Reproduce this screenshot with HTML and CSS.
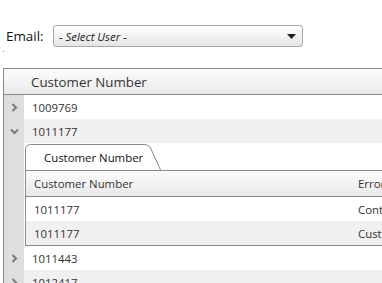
FILE: index.html
```html
<!DOCTYPE html>
<html lang="en">
  <head>
    <meta charset="UTF-8" />
    <title>Customer Errors</title>
    <link rel="stylesheet" href="styles.css">
  </head>
  <body>
    <div class="toolbar">
      <label class="label">Email:</label>
      <div class="select">
        <span class="select-text">- Select User -</span>
        <svg class="select-arrow" width="9" height="5" viewBox="0 0 9 5"><path d="M0 0h9L4.5 5z" fill="#222"/></svg>
      </div>
    </div>
    <div class="mark"></div>

    <div class="grid">
      <div class="grid-header">
        <div class="ind"></div>
        <div class="hcell">Customer Number</div>
      </div>

      <div class="row">
        <div class="ind">
          <svg width="7" height="9" viewBox="0 0 7 9"><path d="M1.5 1l3.5 3.5-3.5 3.5" fill="none" stroke="#7a7a7a" stroke-width="2"/></svg>
        </div>
        <div class="cell">1009769</div>
      </div>
      <div class="row alt">
        <div class="ind">
          <svg width="9" height="7" viewBox="0 0 9 7"><path d="M1 1.5l3.5 3.5 3.5-3.5" fill="none" stroke="#7a7a7a" stroke-width="2"/></svg>
        </div>
        <div class="cell">1011177</div>
      </div>

      <div class="detail-row">
        <div class="ind"></div>
        <div class="detail">
          <div class="tabs">
            <div class="tab">
              <svg class="tab-shape" width="136" height="26" viewBox="0 0 136 26">
                <path d="M0.5 26V5.5Q0.5 0.5 5.5 0.5H119Q124 0.5 126 5L135.5 26" fill="#fff" stroke="#8a8a8a"/>
              </svg>
              <span class="tab-text">Customer Number</span>
            </div>
          </div>
          <div class="subgrid">
            <div class="sub-header">
              <div class="scell first">Customer Number</div>
              <div class="scell">Error</div>
            </div>
            <div class="sub-row">
              <div class="scell first">1011177</div>
              <div class="scell">Contact not found</div>
            </div>
            <div class="sub-row alt">
              <div class="scell first">1011177</div>
              <div class="scell">Customer not found</div>
            </div>
          </div>
        </div>
      </div>

      <div class="row">
        <div class="ind">
          <svg width="7" height="9" viewBox="0 0 7 9"><path d="M1.5 1l3.5 3.5-3.5 3.5" fill="none" stroke="#7a7a7a" stroke-width="2"/></svg>
        </div>
        <div class="cell">1011443</div>
      </div>
      <div class="row alt">
        <div class="ind">
          <svg width="7" height="9" viewBox="0 0 7 9"><path d="M1.5 1l3.5 3.5-3.5 3.5" fill="none" stroke="#7a7a7a" stroke-width="2"/></svg>
        </div>
        <div class="cell">1012417</div>
      </div>
    </div>
  </body>
</html>
```

FILE: styles.css
```css
body {
  margin: 0;
  overflow: hidden;
  font-family: "Open Sans", Arial, sans-serif;
  font-size: 11.4px;
  color: #333;
  background: #fff;
}

.toolbar {
  display: flex;
  align-items: center;
  padding: 25px 0 0 6px;
}

.label {
  font-size: 13.4px;
  color: #111;
  width: 47px;
}

.select {
  display: flex;
  align-items: center;
  justify-content: space-between;
  box-sizing: border-box;
  width: 250px;
  height: 22px;
  padding: 0 5px 0 5px;
  border: 1px solid #a9a9a9;
  border-radius: 3px;
  background: linear-gradient(to bottom, #ffffff 0%, #f3f3f3 50%, #e4e4e4 100%);
}

.select-text {
  font-style: italic;
  color: #222;
}

.select-arrow {
  margin-right: 1px;
}

.mark {
  width: 1px;
  height: 1px;
  margin: 4px 0 0 3px;
  background: #888;
}

.grid {
  width: 560px;
  margin: 16px 0 0 3px;
  border-top: 1px solid #8a8a8a;
  border-left: 1px solid #8a8a8a;
}

.grid-header {
  display: flex;
  height: 25px;
  border-bottom: 1px solid #8a8a8a;
  background: linear-gradient(to bottom, #fbfbfb 0%, #f3f3f3 50%, #e8e8e8 100%);
}

.grid-header .ind {
  background: transparent;
}

.hcell {
  display: flex;
  align-items: center;
  padding-left: 7px;
  font-size: 13.3px;
  color: #333;
}

.ind {
  display: flex;
  align-items: center;
  justify-content: center;
  flex: 0 0 20px;
  background: #dedede;
}

.row {
  display: flex;
  height: 24px;
}

.row.alt .cell,
.sub-row.alt {
  background: #f0f0f0;
}

.cell {
  flex: 1;
  display: flex;
  align-items: center;
  padding-left: 8px;
}

.detail-row {
  display: flex;
}

.detail {
  flex: 1;
  padding: 1px 0 0 1px;
}

.tabs {
  display: flex;
}

.tab {
  display: grid;
  height: 26px;
}

.tab-shape,
.tab-text {
  grid-area: 1 / 1;
}

.tab-text {
  align-self: center;
  padding: 1px 0 0 19px;
  color: #111;
}

.subgrid {
  border-top: 1px solid #8a8a8a;
  border-left: 1px solid #8a8a8a;
  border-bottom: 1px solid #8a8a8a;
}

.sub-header {
  display: flex;
  height: 25px;
  border-bottom: 1px solid #8a8a8a;
  background: linear-gradient(to bottom, #fbfbfb 0%, #f3f3f3 50%, #e8e8e8 100%);
}

.sub-row {
  display: flex;
  height: 24px;
}

.scell {
  display: flex;
  align-items: center;
  padding-left: 8px;
  white-space: nowrap;
}

.scell.first {
  flex: 0 0 316px;
}
```
